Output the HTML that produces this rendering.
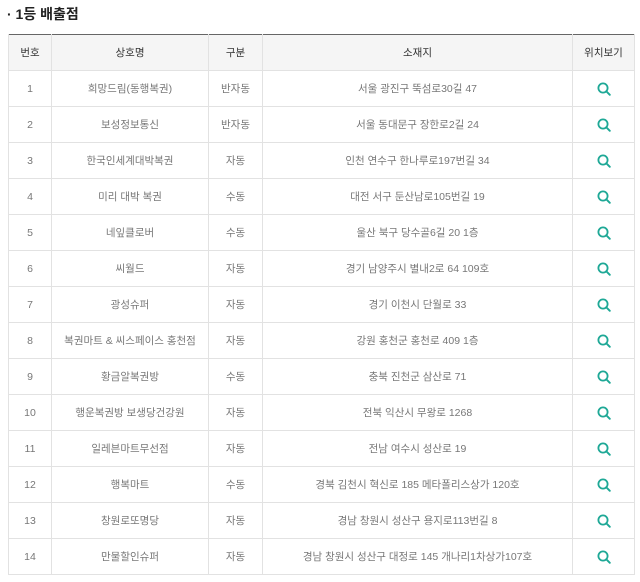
<!DOCTYPE html>
<html><head><meta charset="utf-8"><style>
body{margin:0;background:#fff;font-family:"Liberation Sans","Noto Sans CJK KR",sans-serif;width:640px;height:582px;overflow:hidden}
h2{position:absolute;left:7px;top:4px;margin:0;font-size:14px;font-weight:bold;color:#222;line-height:20px}
table{position:absolute;left:8px;top:34px;width:626px;border-collapse:collapse;table-layout:fixed;border-top:1px solid #666}
td,th{border:1px solid #e2e2e2;height:35px;padding:0;text-align:center;font-size:10.5px;color:#777;font-weight:normal;white-space:nowrap;overflow:hidden}
th{background:#f5f5f5;color:#333;border-top:none}
td.i svg{display:block;margin:0 auto}
</style></head><body>
<h2>· 1등 배출점</h2>
<table>
<colgroup><col style="width:43px"><col style="width:157px"><col style="width:54px"><col style="width:310px"><col style="width:62px"></colgroup>
<tr><th>번호</th><th>상호명</th><th>구분</th><th>소재지</th><th>위치보기</th></tr>
<tr><td>1</td><td>희망드림(동행복권)</td><td>반자동</td><td>서울 광진구 뚝섬로30길 47</td><td class="i">Q</td></tr>
<tr><td>2</td><td>보성정보통신</td><td>반자동</td><td>서울 동대문구 장한로2길 24</td><td class="i">Q</td></tr>
<tr><td>3</td><td>한국인세계대박복권</td><td>자동</td><td>인천 연수구 한나루로197번길 34</td><td class="i">Q</td></tr>
<tr><td>4</td><td>미리 대박 복권</td><td>수동</td><td>대전 서구 둔산남로105번길 19</td><td class="i">Q</td></tr>
<tr><td>5</td><td>네잎클로버</td><td>수동</td><td>울산 북구 당수골6길 20 1층</td><td class="i">Q</td></tr>
<tr><td>6</td><td>씨월드</td><td>자동</td><td>경기 남양주시 별내2로 64 109호</td><td class="i">Q</td></tr>
<tr><td>7</td><td>광성슈퍼</td><td>자동</td><td>경기 이천시 단월로 33</td><td class="i">Q</td></tr>
<tr><td>8</td><td>복권마트 &amp; 씨스페이스 홍천점</td><td>자동</td><td>강원 홍천군 홍천로 409 1층</td><td class="i">Q</td></tr>
<tr><td>9</td><td>황금알복권방</td><td>수동</td><td>충북 진천군 삼산로 71</td><td class="i">Q</td></tr>
<tr><td>10</td><td>행운복권방 보생당건강원</td><td>자동</td><td>전북 익산시 무왕로 1268</td><td class="i">Q</td></tr>
<tr><td>11</td><td>일레븐마트무선점</td><td>자동</td><td>전남 여수시 성산로 19</td><td class="i">Q</td></tr>
<tr><td>12</td><td>행복마트</td><td>수동</td><td>경북 김천시 혁신로 185 메타폴리스상가 120호</td><td class="i">Q</td></tr>
<tr><td>13</td><td>창원로또명당</td><td>자동</td><td>경남 창원시 성산구 용지로113번길 8</td><td class="i">Q</td></tr>
<tr><td>14</td><td>만물할인슈퍼</td><td>자동</td><td>경남 창원시 성산구 대정로 145 개나리1차상가107호</td><td class="i">Q</td></tr>
</table>
<script>
document.querySelectorAll('td.i').forEach(function(t){t.innerHTML='<svg width="14" height="14" viewBox="0 0 14 14"><circle cx="6" cy="6" r="4.6" fill="none" stroke="#1ea896" stroke-width="1.8"/><line x1="9.3" y1="9.3" x2="12.8" y2="12.8" stroke="#1ea896" stroke-width="1.9" stroke-linecap="round"/></svg>';});
</script>
</body></html>
